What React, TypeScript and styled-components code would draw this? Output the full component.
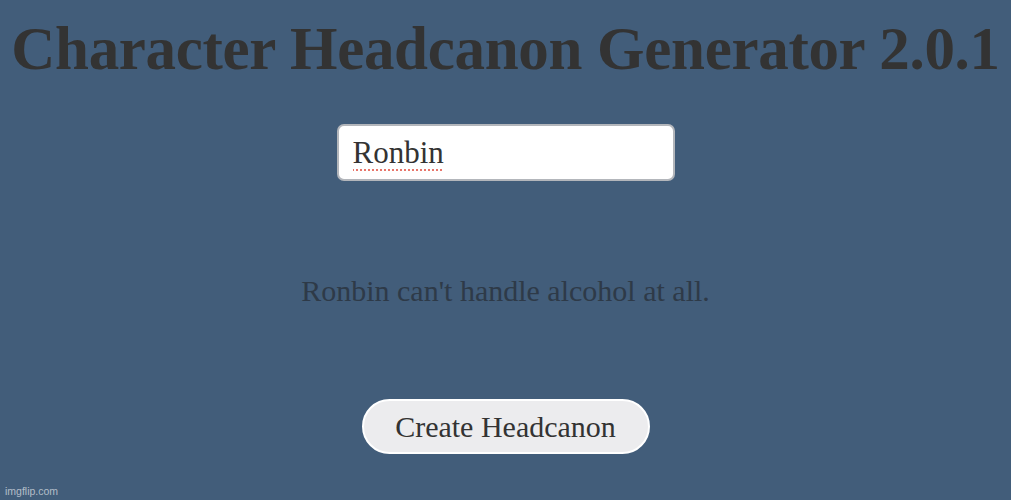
import styled, { createGlobalStyle } from "styled-components";

const GlobalStyle = createGlobalStyle`
  html, body {
    margin: 0;
    padding: 0;
    background: #425d7a;
  }
`;

const Page = styled.div`
  width: 1011px;
  height: 500px;
  overflow: hidden;
  position: relative;

  display: flex;
  flex-direction: column;
  align-items: center;

  background: #425d7a;
  font-family: "Liberation Serif", "Times New Roman", serif;
  color: #333333;
`;

const Title = styled.h1`
  margin: 11px 0 0;

  font-size: 61px;
  font-weight: bold;
  letter-spacing: -0.3px;
  line-height: 76px;
  white-space: nowrap;
`;

const NameInput = styled.input`
  box-sizing: border-box;
  width: 338px;
  height: 57px;

  margin-top: 37px;
  padding: 0 14px;

  background: #ffffff;
  border: 2px solid #b3b6bb;
  border-radius: 7px;

  color: #333333;
  font-family: "Liberation Serif", "Times New Roman", serif;
  font-size: 31px;

  text-decoration: underline dotted #e8766b;
  text-decoration-thickness: 2px;
  text-underline-offset: 7px;

  &:focus {
    outline: none;
  }
`;

const Result = styled.p`
  margin: 90px 0 0;

  color: #2e3a48;
  font-size: 30px;
  line-height: 40px;
`;

const CreateButton = styled.button`
  box-sizing: border-box;
  width: 288px;
  height: 55px;

  margin-top: 88px;

  background: #ececee;
  border: 2px solid #ffffff;
  border-radius: 28px;

  color: #333333;
  font-family: "Liberation Serif", "Times New Roman", serif;
  font-size: 30px;

  cursor: pointer;
`;

const Watermark = styled.span`
  position: absolute;
  left: 5px;
  bottom: 3px;

  color: rgba(255, 255, 255, 0.6);
  font-family: "Liberation Sans", Arial, sans-serif;
  font-size: 10.5px;
`;

const App = () => {
  return (
    <Page>
      <GlobalStyle />
      <Title>Character Headcanon Generator 2.0.1</Title>
      <NameInput type="text" defaultValue="Ronbin" spellCheck={false} />
      <Result>Ronbin can't handle alcohol at all.</Result>
      <CreateButton>Create Headcanon</CreateButton>
      <Watermark>imgflip.com</Watermark>
    </Page>
  );
};

export default App;
